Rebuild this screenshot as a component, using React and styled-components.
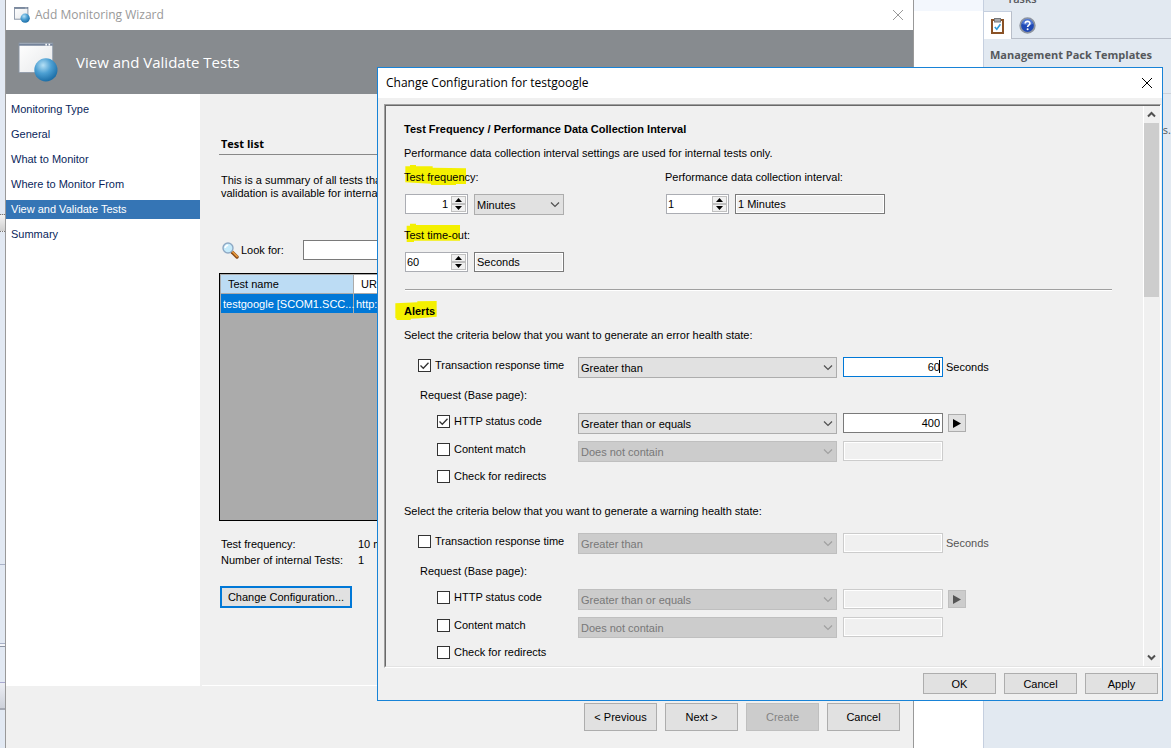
import { useState } from "react";
import styled, { createGlobalStyle, css } from "styled-components";

const GlobalStyle = createGlobalStyle`
    * {
        box-sizing: border-box;
    }
    body {
        margin: 0;
        background: #fff;
        color: #000;
        font-family: "Liberation Sans", Arial, sans-serif;
        font-size: 11px;
        line-height: 16px;
    }
    button, input, select {
        font: inherit;
        color: inherit;
        margin: 0;
        padding: 0;
        border-radius: 0;
    }
    p, h1, h2, h3 {
        margin: 0;
        font-size: inherit;
        font-weight: inherit;
    }
`

const Desktop = styled.div`
    position: relative;
    display: grid;
    grid-template-columns: 5px minmax(0, 1fr) 69px 188px;
    height: 100vh;
    min-height: 720px;
    overflow: hidden;
`

// console window behind the wizard
const ConsoleEdge = styled.div`
    display: flex;
    flex-direction: column;
    background: #e2e9f3;
`
const EdgeSpace = styled.div`
    flex: ${({ $grow }) => $grow} 0 0;
`
const EdgeGrip = styled.div`
    height: 18px;
    border-top: 1px dotted #777;
    border-bottom: 1px dotted #777;
    background: linear-gradient(#f4f4f4, #cfcfcf);
`
const EdgeLine = styled.div`
    height: ${({ $tall }) => ($tall ? "4px" : "1px")};
    border-top: 1px solid #a9b2c8;
    border-bottom: ${({ $tall }) => ($tall ? "1px solid #8e96a6" : "0")};
    background: #f4f6fa;
`
const EdgeBar = styled.div`
    height: 28px;
    border-top: 1px solid #a9a9d0;
    border-bottom: 2px solid #a4a8b2;
    background: linear-gradient(#eceef4, #cdd1da);
`
const ConsoleGap = styled.div`
    background: linear-gradient(#f3f7fd 11px, #fff 11px);
`

// tasks pane
const TasksPane = styled.aside`
    display: flex;
    flex-direction: column;
    border-left: 1px solid #c5cfdf;
    background: #e2e9f1;
    color: #55585c;
    font-family: "Open Sans", "Noto Sans", sans-serif;
    overflow: hidden;
`
const TasksTitle = styled.h2`
    height: 11px;
    padding: 0 0 4px 23px;
    display: flex;
    align-items: flex-end;
    line-height: 17px;
    font-size: 11px;
    font-weight: 600;
`
const TasksTabs = styled.div`
    display: flex;
    height: 28px;
    border-bottom: 1px solid #b8bec9;
`
const TasksTab = styled.button`
    width: ${({ $active }) => ($active ? "28px" : "31px")};
    height: 28px;
    border: 0;
    border-top: 1px solid ${({ $active }) => ($active ? "#c5cfdf" : "transparent")};
    border-right: 1px solid ${({ $active }) => ($active ? "#b8bec9" : "transparent")};
    background: ${({ $active }) => ($active ? "#fff" : "transparent")};
    display: flex;
    align-items: center;
    justify-content: center;
`
const TasksHeading = styled.h3`
    padding: 8px 6px 30px;
    border-bottom: 1px solid #cdd2da;
    font-size: 11px;
    font-weight: 700;
    white-space: nowrap;
`
const TasksNote = styled.p`
    padding-top: 28px;
    text-align: right;
`

// wizard window
const Wizard = styled.main`
    display: flex;
    flex-direction: column;
    min-width: 0;
    border-left: 1px solid #999;
    border-right: 1px solid #999;
    background: #f0f0f0;
`
const TitleBar = styled.header`
    display: flex;
    align-items: center;
    height: 30px;
    flex: none;
    padding: 0 8px;
    gap: 5px;
    background: #fff;
    color: ${({ $inactive }) => ($inactive ? "#999" : "#000")};
    font-family: "Open Sans", "Noto Sans", sans-serif;
    font-size: 12px;
`
const TitleText = styled.h1`
    flex: 1;
`
const CloseButton = styled.button`
    width: 14px;
    height: 14px;
    border: 0;
    background: none;
    display: flex;
    align-items: center;
    justify-content: center;
`
const Banner = styled.div`
    display: flex;
    align-items: center;
    gap: 18px;
    height: 64px;
    flex: none;
    padding-left: 12px;
    background: #878b8f;
    color: #fff;
    font-family: "Open Sans", "Noto Sans", sans-serif;
    font-size: 15px;
`
const WizardBody = styled.div`
    display: flex;
    flex: 1;
    min-height: 0;
`
const Steps = styled.nav`
    display: flex;
    flex-direction: column;
    gap: 6px;
    width: 194px;
    flex: none;
    padding-top: 6px;
    background: #fff;
`
const Step = styled.a`
    padding-left: 5px;
    line-height: 19px;
    text-decoration: none;
    color: ${({ $current }) => ($current ? "#fff" : "#0a1f5c")};
    background: ${({ $current }) => ($current ? "#3575b5" : "transparent")};
`
const Page = styled.section`
    display: flex;
    flex-direction: column;
    flex: 1;
    min-width: 0;
    margin-left: 2px;
    padding: 42px 17px 77px;
    border-bottom: 1px solid #fff;
`
const PageTitle = styled.h2`
    padding: 0 2px 2px;
    border-bottom: 1px solid #888;
    font-family: "Open Sans", "Noto Sans", sans-serif;
    font-weight: 700;
`
const PageIntro = styled.p`
    padding: 19px 2px 40px;
    line-height: 13px;
    white-space: pre-line;
`
const LookFor = styled.div`
    display: flex;
    align-items: center;
    height: 20px;
    padding-left: 3px;

    label {
        width: 62px;
        margin-left: 2px;
    }
    input {
        width: 180px;
        height: 20px;
        border: 1px solid #7a7a7a;
        background: #fff;
    }
`
const TestGrid = styled.div`
    flex: 1;
    margin-top: 13px;
    padding: 1px;
    border: 1px solid #000;
    background: #ababab;
`
const TestTable = styled.table`
    width: 100%;
    border-collapse: separate;
    border-spacing: 0;
    table-layout: fixed;
    text-align: left;

    th, td {
        height: 19px;
        padding: 0 0 0 2px;
        border-right: 1px solid #ababab;
        font-weight: 400;
        line-height: 18px;
        white-space: nowrap;
    }
    th {
        padding-left: 7px;
        border-bottom: 1px solid #ababab;
        background: #fff;
    }
    th:first-child {
        width: 133px;
        background: #bcdcf4;
    }
    tbody tr {
        background: #0078d7;
        color: #fff;
    }
`
const Summary = styled.dl`
    display: grid;
    grid-template-columns: 137px auto;
    margin: 15px 2px 18px;

    dd {
        margin: 0;
    }
`
const pushButton = css`
    border: 1px solid #adadad;
    background: #e1e1e1;

    &:disabled {
        border-color: #bfbfbf;
        background: #ccc;
        color: #838383;
    }
`
const Button = styled.button`
    ${pushButton}
    width: 73px;
    height: ${({ $tall }) => ($tall ? "28px" : "21px")};
`
const DefaultButton = styled.button`
    width: 132px;
    height: 22px;
    margin-left: 1px;
    border: 2px solid #0078d7;
    background: #e1e1e1;
    line-height: 18px;
`
const ButtonBar = styled.footer`
    display: flex;
    justify-content: flex-end;
    gap: 8px;
    flex: none;
    padding: ${({ $wizard }) => ($wizard ? "17px 13px" : "5px 4px 6px")};
`

// configuration dialog
const Dialog = styled.div`
    position: absolute;
    top: 67px;
    right: 8px;
    bottom: 47px;
    left: 377px;
    display: flex;
    flex-direction: column;
    border: 1px solid #1883d7;
    background: #f0f0f0;
`
const Frame = styled.div`
    display: flex;
    flex: 1;
    min-height: 0;
    margin: 6px 1px 0 6px;
    border-top: 1px solid #a0a0a0;
    border-left: 1px solid #a0a0a0;
    border-right: 1px solid #fff;
    border-bottom: 1px solid #fff;
`
const FrameInner = styled.div`
    display: flex;
    flex: 1;
    min-width: 0;
    border-top: 1px solid #696969;
    border-left: 1px solid #696969;
    border-bottom: 1px solid #e3e3e3;
`
const Settings = styled.form`
    flex: 1;
    min-width: 0;
    padding: 15px 31px 0 18px;
    overflow: hidden;
`
const ScrollBar = styled.div`
    display: flex;
    flex-direction: column;
    justify-content: space-between;
    width: 17px;
    padding-right: 1px;
    border-left: 1px solid #fff;
`
const ScrollArrow = styled.button`
    height: 17px;
    border: 0;
    background: none;
    display: flex;
    align-items: center;
    justify-content: center;
`
const ScrollTrack = styled.div`
    flex: 1;
`
const ScrollThumb = styled.div`
    height: 33%;
    background: #cdcdcd;
`
const SectionTitle = styled.h2`
    position: relative;
    font-weight: 700;
`
const Text = styled.p`
    margin-top: 8px;
`
const Frequencies = styled.div`
    display: grid;
    grid-template-columns: 261px auto;
    margin-top: 8px;
`
const Field = styled.div`
    position: relative;
    display: flex;
    flex-direction: column;
    margin-bottom: ${({ $last }) => ($last ? "16px" : "12px")};
`
const Marked = styled.span`
    position: relative;
`
const Marker = styled.svg`
    position: absolute;
    top: -5px;
    left: ${({ $left }) => $left || "0"};
    display: block;
`
const FieldInputs = styled.div`
    display: flex;
    gap: 6px;
    height: 21px;
    margin: 9px 0 0 1px;
`
const Spinner = styled.div`
    display: flex;
    width: 63px;
    height: 20px;
    padding: 1px;
    border: 1px solid #abadb3;
    background: #fff;

    input {
        flex: 1;
        min-width: 0;
        padding-right: 3px;
        border: 0;
        background: none;
        text-align: ${({ $align }) => $align || "left"};
    }
`
const SpinnerButtons = styled.div`
    display: flex;
    flex-direction: column;
    width: 15px;
    background: #f0f0f0;

    button {
        display: flex;
        align-items: center;
        justify-content: center;
        flex: 1;
        border: 1px solid #c0c0c0;
        background: #f0f0f0;
    }
`
const ReadOnlyBox = styled.input`
    width: ${({ $wide }) => ($wide ? "150px" : "90px")};
    height: 20px;
    padding: 0 2px;
    border: 1px solid #7a7a7a;
    outline: 1px solid #fff;
    outline-offset: -2px;
    background: #f0f0f0;
`
const Divider = styled.hr`
    height: 2px;
    margin: 0 0 12px 1px;
    border: 0;
    border-top: 1px solid #a0a0a0;
    background: #fff;
`
const Criteria = styled.fieldset`
    display: flex;
    flex-direction: column;
    min-width: 0;
    margin: ${({ $second }) => ($second ? "19px 0 0" : "8px 0 0")};
    padding: 0 0 0 14px;
    border: 0;

    legend {
        margin: 0 0 14px -14px;
        padding: 0;
    }
`
const RequestTitle = styled.p`
    margin: 9px 0 10px;
    padding-left: 2px;
`
const RequestRows = styled.div`
    display: flex;
    flex-direction: column;
    gap: 7px;
`
const CriteriaRow = styled.div`
    display: flex;
    align-items: flex-start;
`
const CheckLabel = styled.label`
    display: flex;
    align-items: flex-start;
    gap: 4px;
    width: 160px;
    height: 15px;
    margin-top: ${({ $inline }) => ($inline ? "1px" : "0")};
    padding-left: ${({ $nested }) => ($nested ? "19px" : "0")};
    flex: none;
    line-height: 14px;
`
const CheckBox = styled.span`
    position: relative;
    display: block;
    width: 13px;
    height: 13px;
    margin-top: 1px;

    input {
        display: block;
        appearance: none;
        width: 13px;
        height: 13px;
        border: 1px solid #333;
        background: #fff;
    }
    svg {
        position: absolute;
        top: 0;
        left: 0;
        pointer-events: none;
    }
`
const SelectBox = styled.div`
    position: relative;
    flex: 0 1 ${({ $small }) => ($small ? "90px" : "259px")};
    height: 21px;
    margin-right: ${({ $small }) => ($small ? "0" : "6px")};

    select {
        display: block;
        appearance: none;
        width: 100%;
        height: 21px;
        padding: 0 20px 0 2px;
        border: 1px solid #adadad;
        background: #e1e1e1;
        opacity: 1;
    }
    select:disabled {
        border-color: #bfbfbf;
        background: #ccc;
        color: #787878;
    }
    svg {
        position: absolute;
        top: 8px;
        right: 4px;
        pointer-events: none;
    }
`
const ValueBox = styled.div`
    position: relative;
    width: 100px;
    margin-right: 3px;

    input {
        display: block;
        width: 100%;
        height: 20px;
        padding: 0 2px;
        border: 1px solid ${({ $focused }) => ($focused ? "#0078d7" : "#7a7a7a")};
        background: #fff;
        text-align: right;
    }
    input:disabled {
        border-color: #ccc;
        outline: 1px solid #fff;
        outline-offset: -2px;
        background: #f0f0f0;
    }
`
const Caret = styled.span`
    position: absolute;
    top: 3px;
    right: 3px;
    width: 1px;
    height: 13px;
    background: #000;
`
const Unit = styled.span`
    line-height: 20px;
    color: ${({ $disabled }) => ($disabled ? "#555" : "#000")};
`
const PlayButton = styled.button`
    ${pushButton}
    display: flex;
    align-items: center;
    justify-content: center;
    width: 18px;
    height: 18px;
    margin: 1px 0 0 2px;
`

const WindowIcon = ({ size }) => (
    <svg width={size} height={size} viewBox="0 0 38 38" aria-hidden="true">
        <defs>
            <radialGradient id={`globe${size}`} cx="38%" cy="30%" r="70%">
                <stop offset="0" stopColor="#b5e0f5" />
                <stop offset="0.5" stopColor="#4da0d3" />
                <stop offset="1" stopColor="#1d6fa8" />
            </radialGradient>
            <linearGradient id={`sheet${size}`} x1="0" y1="0" x2="1" y2="1">
                <stop offset="0" stopColor="#fff" />
                <stop offset="1" stopColor="#e6e8ea" />
            </linearGradient>
        </defs>
        <rect x="1" y="1" width="32" height="28" fill={`url(#sheet${size})`} stroke="#8d98a8" strokeWidth={size < 20 ? 2.4 : 0.8} />
        <path d="M1 2.5h32" stroke="#74839a" strokeWidth={size < 20 ? 4 : 2} />
        <path d="M26 2.5h1.5M29 2.5h1.5" stroke="#fff" strokeWidth="1.5" />
        <circle cx="26.5" cy="26.5" r="11" fill={`url(#globe${size})`} />
    </svg>
)

const CloseIcon = () => (
    <svg width="12" height="12" viewBox="0 0 12 12" fill="none" stroke="currentColor">
        <path d="M1 1l10 10M11 1L1 11" />
    </svg>
)

const SearchIcon = () => (
    <svg width="17" height="17" viewBox="0 0 17 17" aria-hidden="true">
        <path d="M10 10l5 5" stroke="#8a4a16" strokeWidth="3.4" strokeLinecap="round" />
        <path d="M10.5 9.8l4.6 4.6" stroke="#e89a3c" strokeWidth="1.6" strokeLinecap="round" />
        <circle cx="6" cy="6" r="5" fill="#c6ebfb" stroke="#8fa9c4" strokeWidth="1.4" />
        <path d="M3.2 6a3 3 0 0 1 3-2.8" stroke="#fff" strokeWidth="1.6" fill="none" />
    </svg>
)

const ClipboardIcon = () => (
    <svg width="13" height="16" viewBox="0 0 13 16" aria-hidden="true">
        <rect x="1" y="2" width="11" height="13" fill="#fff" stroke="#8a5226" strokeWidth="2" />
        <rect x="3.5" y="0.5" width="6" height="3.5" fill="#a7a9ac" stroke="#77797c" />
        <path d="M3.8 9l2 2.3 3.6-5" stroke="#2f9bd8" strokeWidth="1.6" fill="none" />
    </svg>
)

const HelpIcon = () => (
    <svg width="17" height="17" viewBox="0 0 17 17" aria-hidden="true">
        <circle cx="8.5" cy="8.5" r="7.3" fill="#1f49b6" stroke="#8d949f" strokeWidth="1.8" />
        <path d="M3 7a5.5 5.5 0 0 1 11 0q-5.5 2-11 0" fill="#6c92e6" opacity="0.6" />
        <path d="M6.2 6.6c0-3 4.8-2.9 4.7-.2 0 1.7-2.3 1.6-2.3 3.5" stroke="#fff" strokeWidth="1.6" fill="none" />
        <circle cx="8.6" cy="12.2" r="1" fill="#fff" />
    </svg>
)

const Chevron = ({ disabled }) => (
    <svg width="10" height="6" viewBox="0 0 10 6" fill="none" stroke={disabled ? "#a0a0a0" : "#505050"} aria-hidden="true">
        <path d="M1 0.5l4 4 4-4" strokeWidth="1.2" />
    </svg>
)

const ScrollIcon = ({ down }) => (
    <svg width="9" height="7" viewBox="0 0 9 7" fill="none" stroke="#505050" strokeWidth="2">
        <path d={down ? "M1 1.5l3.5 3.5 3.5-3.5" : "M1 5.5l3.5-3.5 3.5 3.5"} />
    </svg>
)

function SpinBox({ id, value, align, label }) {
    return (
        <Spinner $align={align}>
            <input id={id} type="text" aria-label={label} defaultValue={value} />
            <SpinnerButtons>
                <button type="button" aria-label="Increase">
                    <svg width="7" height="4" viewBox="0 0 7 4"><path d="M0 4l3.5-4 3.5 4z" /></svg>
                </button>
                <button type="button" aria-label="Decrease">
                    <svg width="7" height="4" viewBox="0 0 7 4"><path d="M0 0l3.5 4 3.5-4z" /></svg>
                </button>
            </SpinnerButtons>
        </Spinner>
    )
}

function Check({ id, text, checked, nested, inline }) {
    const [on, setOn] = useState(checked);

    return (
        <CheckLabel htmlFor={id} $nested={nested} $inline={inline}>
            <CheckBox>
                <input id={id} type="checkbox" checked={on} onChange={() => setOn(!on)} />
                {on && (
                    <svg width="13" height="13" viewBox="0 0 13 13" fill="none" stroke="#333" strokeWidth="1.3">
                        <path d="M2.5 6.5l2.8 2.8 5.2-5.6" />
                    </svg>
                )}
            </CheckBox>
            {text}
        </CheckLabel>
    )
}

function Combo({ value, label, disabled, small, id }) {
    return (
        <SelectBox $small={small}>
            <select id={id} aria-label={label} disabled={disabled} defaultValue={value}>
                <option>{value}</option>
            </select>
            <Chevron disabled={disabled} />
        </SelectBox>
    )
}

function CompareRow({ id, item, nested }) {
    const off = !item.checked;

    return (
        <CriteriaRow>
            <Check id={id} text={item.text} checked={item.checked} nested={nested} inline={Boolean(item.operator)} />
            {item.operator && (
                <>
                    <Combo value={item.operator} label={`${item.text} operator`} disabled={off} />
                    <ValueBox $focused={item.focused}>
                        <input type="text" aria-label={`${item.text} value`} defaultValue={item.value} disabled={off} />
                        {item.focused && <Caret />}
                    </ValueBox>
                </>
            )}
            {item.unit && <Unit $disabled={off}>{item.unit}</Unit>}
            {item.picker && (
                <PlayButton type="button" aria-label="Pick status code" disabled={off}>
                    <svg width="8" height="9" viewBox="0 0 8 9" fill={off ? "#555" : "#000"}>
                        <path d="M0 0l8 4.5-8 4.5z" />
                    </svg>
                </PlayButton>
            )}
        </CriteriaRow>
    )
}

function CriteriaGroup({ name, title, transaction, request, second }) {
    return (
        <Criteria $second={second}>
            <legend>{title}</legend>
            <CompareRow id={`${name}-time`} item={transaction} />
            <RequestTitle>Request (Base page):</RequestTitle>
            <RequestRows>
                {request.map((item, index) => (
                    <CompareRow key={item.text} id={`${name}-${index}`} item={item} nested />
                ))}
            </RequestRows>
        </Criteria>
    )
}

const steps = [
    "Monitoring Type",
    "General",
    "What to Monitor",
    "Where to Monitor From",
    "View and Validate Tests",
    "Summary",
];

const errorTime = { text: "Transaction response time", checked: true, operator: "Greater than", value: "60", unit: "Seconds", focused: true };
const errorRequest = [
    { text: "HTTP status code", checked: true, operator: "Greater than or equals", value: "400", picker: true },
    { text: "Content match", checked: false, operator: "Does not contain", value: "" },
    { text: "Check for redirects", checked: false },
];
const warningTime = { text: "Transaction response time", checked: false, operator: "Greater than", value: "", unit: "Seconds" };
const warningRequest = [
    { text: "HTTP status code", checked: false, operator: "Greater than or equals", value: "", picker: true },
    { text: "Content match", checked: false, operator: "Does not contain", value: "" },
    { text: "Check for redirects", checked: false },
];

function WizardWindow() {
    return (
        <Wizard>
            <TitleBar $inactive>
                <WindowIcon size={16} />
                <TitleText>Add Monitoring Wizard</TitleText>
                <CloseButton type="button" aria-label="Close wizard"><CloseIcon /></CloseButton>
            </TitleBar>
            <Banner>
                <WindowIcon size={40} />
                <span>View and Validate Tests</span>
            </Banner>
            <WizardBody>
                <Steps>
                    {steps.map((step) => (
                        <Step key={step} href="#" $current={step === "View and Validate Tests"}>{step}</Step>
                    ))}
                </Steps>
                <Page>
                    <PageTitle>Test list</PageTitle>
                    <PageIntro>{"This is a summary of all tests that\nvalidation is available for internal"}</PageIntro>
                    <LookFor>
                        <SearchIcon />
                        <label htmlFor="look-for">Look for:</label>
                        <input id="look-for" type="text" />
                    </LookFor>
                    <TestGrid>
                        <TestTable>
                            <thead>
                                <tr><th>Test name</th><th>URL</th></tr>
                            </thead>
                            <tbody>
                                <tr><td>testgoogle [SCOM1.SCC...</td><td>http://</td></tr>
                            </tbody>
                        </TestTable>
                    </TestGrid>
                    <Summary>
                        <dt>Test frequency:</dt>
                        <dd>10 minutes</dd>
                        <dt>Number of internal Tests:</dt>
                        <dd>1</dd>
                    </Summary>
                    <DefaultButton type="button">Change Configuration...</DefaultButton>
                </Page>
            </WizardBody>
            <ButtonBar $wizard>
                <Button type="button" $tall>&lt; Previous</Button>
                <Button type="button" $tall>Next &gt;</Button>
                <Button type="button" $tall disabled>Create</Button>
                <Button type="button" $tall>Cancel</Button>
            </ButtonBar>
        </Wizard>
    )
}

function ConfigurationDialog() {
    return (
        <Dialog role="dialog" aria-labelledby="dialog-title">
            <TitleBar>
                <TitleText id="dialog-title">Change Configuration for testgoogle</TitleText>
                <CloseButton type="button" aria-label="Close"><CloseIcon /></CloseButton>
            </TitleBar>
            <Frame>
                <FrameInner>
                    <Settings>
                        <SectionTitle>Test Frequency / Performance Data Collection Interval</SectionTitle>
                        <Text>Performance data collection interval settings are used for internal tests only.</Text>
                        <Frequencies>
                            <Field>
                                <Marker width="63" height="22" viewBox="72 315 189 66" fill="#f4f000">
                                    <path d="M76 322h14v-4h18v4h50v4l100 2v47h-30v3h-74l-2-4-26-1-50-3z" />
                                </Marker>
                                <Marked as="label" htmlFor="frequency">Test frequency:</Marked>
                                <FieldInputs>
                                    <SpinBox id="frequency" value="1" align="right" />
                                    <Combo value="Minutes" label="Frequency unit" small />
                                </FieldInputs>
                            </Field>
                            <Field>
                                <label htmlFor="interval">Performance data collection interval:</label>
                                <FieldInputs>
                                    <SpinBox id="interval" value="1" />
                                    <ReadOnlyBox $wide type="text" aria-label="Collection interval" readOnly value="1 Minutes" />
                                </FieldInputs>
                            </Field>
                            <Field $last>
                                <Marker width="63" height="22" viewBox="72 486 189 66" fill="#f4f000">
                                    <path d="M80 497h10v-6h18v4h132v47h-138v4h-22z" />
                                </Marker>
                                <Marked as="label" htmlFor="timeout">Test time-out:</Marked>
                                <FieldInputs>
                                    <SpinBox id="timeout" value="60" />
                                    <ReadOnlyBox type="text" aria-label="Time-out unit" readOnly value="Seconds" />
                                </FieldInputs>
                            </Field>
                        </Frequencies>
                        <Divider />
                        <SectionTitle>
                            <Marker $left="-9px" width="45" height="24" viewBox="45 24 135 72" fill="#f4f000">
                                <path d="M46 40l66-3v-3l58-1v47l-50 5-28 1v4h-42v-4l-4-2z" />
                            </Marker>
                            <Marked>Alerts</Marked>
                        </SectionTitle>
                        <CriteriaGroup
                            name="error"
                            title="Select the criteria below that you want to generate an error health state:"
                            transaction={errorTime}
                            request={errorRequest}
                        />
                        <CriteriaGroup
                            name="warning"
                            title="Select the criteria below that you want to generate a warning health state:"
                            transaction={warningTime}
                            request={warningRequest}
                            second
                        />
                    </Settings>
                    <ScrollBar>
                        <ScrollArrow type="button" aria-label="Scroll up"><ScrollIcon /></ScrollArrow>
                        <ScrollTrack><ScrollThumb /></ScrollTrack>
                        <ScrollArrow type="button" aria-label="Scroll down"><ScrollIcon down /></ScrollArrow>
                    </ScrollBar>
                </FrameInner>
            </Frame>
            <ButtonBar>
                <Button type="button">OK</Button>
                <Button type="button">Cancel</Button>
                <Button type="button">Apply</Button>
            </ButtonBar>
        </Dialog>
    )
}

export default function App() {
    return (
        <>
            <GlobalStyle />
            <Desktop>
                <ConsoleEdge>
                    <EdgeSpace $grow={214} />
                    <EdgeGrip />
                    <EdgeSpace $grow={332} />
                    <EdgeLine />
                    <EdgeSpace $grow={78} />
                    <EdgeLine $tall />
                    <EdgeSpace $grow={35} />
                    <EdgeBar />
                    <EdgeSpace $grow={38} />
                </ConsoleEdge>
                <WizardWindow />
                <ConsoleGap />
                <TasksPane>
                    <TasksTitle>Tasks</TasksTitle>
                    <TasksTabs>
                        <TasksTab type="button" aria-label="Tasks" $active><ClipboardIcon /></TasksTab>
                        <TasksTab type="button" aria-label="Help"><HelpIcon /></TasksTab>
                    </TasksTabs>
                    <TasksHeading>Management Pack Templates</TasksHeading>
                    <TasksNote>ts.</TasksNote>
                </TasksPane>
                <ConfigurationDialog />
            </Desktop>
        </>
    )
}
